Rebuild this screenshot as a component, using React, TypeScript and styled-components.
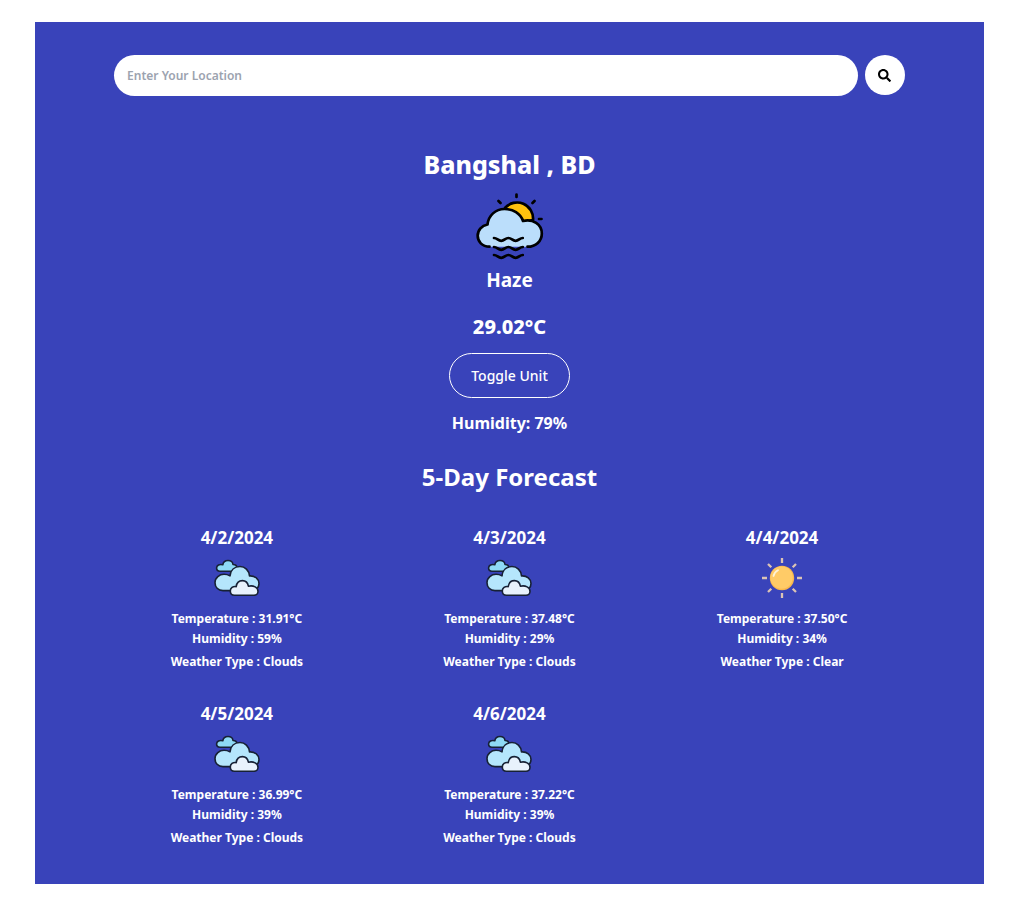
import React, { useState } from "react";
import styled, { createGlobalStyle } from "styled-components";
import { FaSearch } from "react-icons/fa";

const GlobalStyle = createGlobalStyle`
  * { box-sizing: border-box; }
  body {
    margin: 0;
    background: #fff;
    font-family: "Segoe UI", "Noto Sans", "Open Sans", sans-serif;
  }
  h1, h2, h3, p { margin: 0; }
`;

const Page = styled.main`
  margin: 22px 37px 17px 35px;
  padding: 33px 0 36px;
  background: #3943ba;
  color: #fff;
  display: flex;
  flex-direction: column;
  align-items: center;
`;

const SearchForm = styled.form`
  width: calc(100% * 5 / 6);
  display: flex;
  gap: 7px;
`;

const SearchInput = styled.input`
  flex: 1;
  min-width: 0;
  height: 41px;
  padding: 0 13px;
  border: 0;
  border-radius: 21px;
  background: #fff;
  color: #1f2937;
  font: 600 12px "Segoe UI", "Noto Sans", sans-serif;
  &::placeholder { color: #9ca3af; opacity: 1; }
`;

const SearchButton = styled.button`
  width: 40px;
  height: 40px;
  padding: 0;
  border: 0;
  border-radius: 50%;
  background: #fff;
  color: #000;
  display: grid;
  place-items: center;
  cursor: pointer;
`;

const Current = styled.section`
  display: flex;
  flex-direction: column;
  align-items: center;
  text-align: center;
`;

const City = styled.h1`
  margin-top: 52px;
  font-size: 25px;
  line-height: 32px;
  font-weight: 800;
`;

const Condition = styled.p`
  margin-top: 6px;
  font-size: 19px;
  line-height: 28px;
  font-weight: 700;
`;

const Degrees = styled.p`
  margin-top: 19px;
  font-size: 20px;
  line-height: 28px;
  font-weight: 800;
`;

const UnitButton = styled.button`
  margin-top: 12px;
  height: 45px;
  padding: 0 21px;
  border: 1px solid #fff;
  border-radius: 23px;
  background: transparent;
  color: #fff;
  font: 500 14px "Segoe UI", "Noto Sans", sans-serif;
  cursor: pointer;
`;

const Humidity = styled.p`
  margin-top: 13px;
  font-size: 16px;
  line-height: 24px;
  font-weight: 700;
`;

const ForecastTitle = styled.h2`
  margin-top: 26px;
  font-size: 24px;
  line-height: 32px;
  font-weight: 700;
`;

const ForecastGrid = styled.section`
  width: calc(100% * 5 / 6);
  margin-top: 33px;
  display: grid;
  grid-template-columns: repeat(3, 1fr);
  gap: 30px 27px;
`;

const Day = styled.article`
  display: flex;
  flex-direction: column;
  align-items: center;
  text-align: center;
`;

const DayDate = styled.h3`
  margin-bottom: 4px;
  font-size: 17px;
  line-height: 24px;
  font-weight: 700;
`;

const Detail = styled.p<{ $gap?: number }>`
  margin-top: ${(p) => p.$gap ?? 0}px;
  font-size: 12px;
  line-height: 20px;
  font-weight: 700;
`;

const HazeArt = styled.svg`
  width: 68px;
  height: 68px;
  margin-top: 12px;
  overflow: visible;
`;

const DayArt = styled.svg`
  width: 48px;
  height: 48px;
`;

const HazeIcon = () => (
  <HazeArt viewBox="-1 0 68 68" fill="none" stroke="#000" strokeWidth="2.7" strokeLinecap="round" strokeLinejoin="round" aria-hidden="true">
    <path d="M29 16A16 16 0 0 1 57 28L46 30Z" fill="#ffc20e" />
    <path d="M13.500 54.700C6 54.700 1.700 49.500 1.700 43.800C1.700 38 5.800 33.500 11.500 32.500C12.500 23.500 19.500 17 28.500 17C37 17 44.500 21.500 47 29C57 26.500 65.800 32.500 65.800 41.500C65.800 49 60 54.700 51.500 54.700Z" fill="#bbdefb" stroke="none" />
    <path d="M13.500 54.700C6 54.700 1.700 49.500 1.700 43.800C1.700 38 5.800 33.500 11.500 32.500C12.500 23.500 19.500 17 28.500 17C37 17 44.500 21.500 47 29C57 26.500 65.800 32.500 65.800 41.500C65.800 49 60 54.700 51.500 54.700" />
    <path d="M40.500 2.500V5M22.500 9L24.500 11M58.500 9L56.500 11M63 27H65.500" />
    <path d="M18 46c3.300 0 3.900 2.800 7.200 2.800s3.900-2.800 7.200-2.800 3.900 2.800 7.200 2.800 3.900-2.800 7.200-2.800M18 55c3.300 0 3.900 2.800 7.200 2.800s3.900-2.800 7.200-2.800 3.900 2.800 7.200 2.800 3.900-2.800 7.200-2.800M18 63c3.300 0 3.900 2.800 7.200 2.800s3.900-2.800 7.200-2.800 3.900 2.800 7.200 2.800 3.900-2.800 7.200-2.800" />
  </HazeArt>
);

const CloudsIcon = () => (
  <DayArt viewBox="0 0 48 48" stroke="#172135" strokeWidth="1.6" strokeLinejoin="round" aria-hidden="true">
    <path d="M7 17.200C4.800 17.200 3.600 15.700 3.600 14C3.600 11.500 6.500 9.700 9.800 10.800C10.200 8.200 12.500 6.500 15 6.500C18 6.500 19.800 8.500 20 10.500C22.500 10.500 24 12 24.200 14L20 17.200Z" fill="#8edaf5" />
    <path d="M10 36.600C5 36.600 2 33 2 28.700C2 23.500 6.500 20.300 11 20.300C13.300 20.300 15.500 21 17 21.900C17.500 16 21.500 12.500 27 12.500C32 12.500 36 16.500 36.500 21.900C42 21.500 46 25 46 29.500C46 33.500 43 36.600 38.500 36.600Z" fill="#b5e6fc" />
    <path d="M21.500 41.300C18.800 41.300 17.300 39.300 17.300 37C17.300 34 20 32 23.200 32.600C23.700 29 26.200 26.600 29.400 26.600C32.500 26.600 34.800 29 35.400 32.200C40.500 31 45 33.500 45 37.200C45 39.500 43.300 41.300 41 41.300Z" fill="#e8f2fc" />
  </DayArt>
);

const SunIcon = () => (
  <DayArt viewBox="0 0 48 48" fill="none" aria-hidden="true">
    <path d="M24 4V9M24 39V44M4 24H9M39 24H44M10 10L13.300 13.300M34.700 34.700L38 38M38 10L34.700 13.300M13.300 34.700L10 38" stroke="#dbc3b5" strokeWidth="2.300" />
    <circle cx="24" cy="24" r="12.200" fill="#f9b84e" />
    <circle cx="23.600" cy="23.600" r="11.200" fill="#ffcb67" />
    <path d="M15.500 22Q16.500 18 20 16.300" stroke="#fff3d8" strokeWidth="1.800" strokeLinecap="round" />
  </DayArt>
);

const days = [
  { date: "4/2/2024", celsius: 31.91, humidity: 59, type: "Clouds" },
  { date: "4/3/2024", celsius: 37.48, humidity: 29, type: "Clouds" },
  { date: "4/4/2024", celsius: 37.5, humidity: 34, type: "Clear" },
  { date: "4/5/2024", celsius: 36.99, humidity: 39, type: "Clouds" },
  { date: "4/6/2024", celsius: 37.22, humidity: 39, type: "Clouds" },
];

export default function App() {
  const [fahrenheit, setFahrenheit] = useState(false);
  const format = (c: number) =>
    fahrenheit ? `${((c * 9) / 5 + 32).toFixed(2)}°F` : `${c.toFixed(2)}°C`;

  return (
    <>
      <GlobalStyle />
      <Page>
        <SearchForm onSubmit={(e) => e.preventDefault()}>
          <SearchInput type="text" aria-label="Location" placeholder="Enter Your Location" />
          <SearchButton type="submit" aria-label="Search">
            <FaSearch size={13} />
          </SearchButton>
        </SearchForm>
        <Current>
          <City>Bangshal , BD</City>
          <HazeIcon />
          <Condition>Haze</Condition>
          <Degrees>{format(29.02)}</Degrees>
          <UnitButton type="button" onClick={() => setFahrenheit(!fahrenheit)}>
            Toggle Unit
          </UnitButton>
          <Humidity>Humidity: 79%</Humidity>
        </Current>
        <ForecastTitle>5-Day Forecast</ForecastTitle>
        <ForecastGrid>
          {days.map((day) => (
            <Day key={day.date}>
              <DayDate>{day.date}</DayDate>
              {day.type === "Clear" ? <SunIcon /> : <CloudsIcon />}
              <Detail $gap={7}>Temperature : {format(day.celsius)}</Detail>
              <Detail>Humidity : {day.humidity}%</Detail>
              <Detail $gap={3}>Weather Type : {day.type}</Detail>
            </Day>
          ))}
        </ForecastGrid>
      </Page>
    </>
  );
}
